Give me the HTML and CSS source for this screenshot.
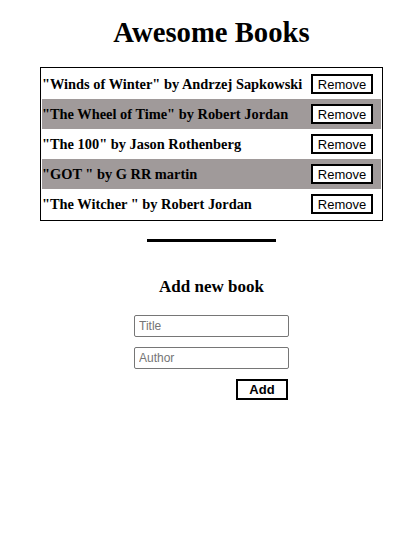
FILE: index.html
```html
<!DOCTYPE html>
<html>
<head>
<meta charset="utf-8">
<link rel="stylesheet" href="styles.css">
</head>
<body>
<main class="page">
  <h1 class="title">Awesome Books</h1>
  <ul class="books">
    <li class="book"><span class="book-text">"Winds of Winter" by Andrzej Sapkowski</span><button class="remove">Remove</button></li>
    <li class="book alt"><span class="book-text">"The Wheel of Time" by Robert Jordan</span><button class="remove">Remove</button></li>
    <li class="book"><span class="book-text">"The 100" by Jason Rothenberg</span><button class="remove">Remove</button></li>
    <li class="book alt"><span class="book-text">"GOT " by G RR martin</span><button class="remove">Remove</button></li>
    <li class="book"><span class="book-text">"The Witcher " by Robert Jordan</span><button class="remove">Remove</button></li>
  </ul>
  <hr class="divider">
  <h2 class="form-title">Add new book</h2>
  <form class="add-form">
    <input class="field" type="text" placeholder="Title">
    <input class="field" type="text" placeholder="Author">
    <div class="actions"><button class="add" type="button">Add</button></div>
  </form>
</main>
</body>
</html>
```
FILE: styles.css
```css
html, body {
  margin: 0;
  padding: 0;
  background: #fff;
}
body {
  font-family: "Liberation Serif", "Times New Roman", serif;
  color: #000;
}
.page {
  padding-left: 10px;
  display: flex;
  flex-direction: column;
  align-items: center;
}
.title {
  margin: 14px 0 0;
  font-size: 28.7px;
  font-weight: bold;
  line-height: 36px;
}
.books {
  list-style: none;
  margin: 17px 0 0;
  padding: 1px;
  width: 339px;
  border: 1px solid #000;
}
.book {
  display: flex;
  align-items: center;
  justify-content: space-between;
  height: 30px;
  padding: 0 8px 0 0;
}
.book.alt {
  background: #a09a9a;
}
.book-text {
  font-size: 14.4px;
  font-weight: bold;
  white-space: nowrap;
}
.remove {
  box-sizing: border-box;
  flex: none;
  width: 62px;
  height: 20px;
  border: 2px solid #000;
  background: #fff;
  font-family: "Liberation Sans", Arial, sans-serif;
  font-size: 13px;
  padding: 0;
  color: #000;
}
.divider {
  width: 129px;
  height: 3px;
  margin: 18px 0 0;
  border: 0;
  background: #000;
}
.form-title {
  margin: 34px 0 0;
  font-size: 17px;
  line-height: 22px;
}
.add-form {
  margin-top: 17px;
  display: flex;
  flex-direction: column;
  gap: 10px;
  width: 155px;
}
.field {
  box-sizing: border-box;
  width: 155px;
  height: 22px;
  margin: 0;
  border: 1px solid #767676;
  border-radius: 2px;
  padding: 1px 4px;
  font-family: "Liberation Sans", Arial, sans-serif;
  font-size: 12px;
}
.field::placeholder {
  color: #757575;
}
.actions {
  display: flex;
  justify-content: flex-end;
  padding-right: 1px;
}
.add {
  box-sizing: border-box;
  width: 52px;
  height: 21px;
  border: 2px solid #000;
  background: #fff;
  font-family: "Liberation Sans", Arial, sans-serif;
  font-size: 13px;
  font-weight: bold;
  padding: 0;
  color: #000;
}
```
